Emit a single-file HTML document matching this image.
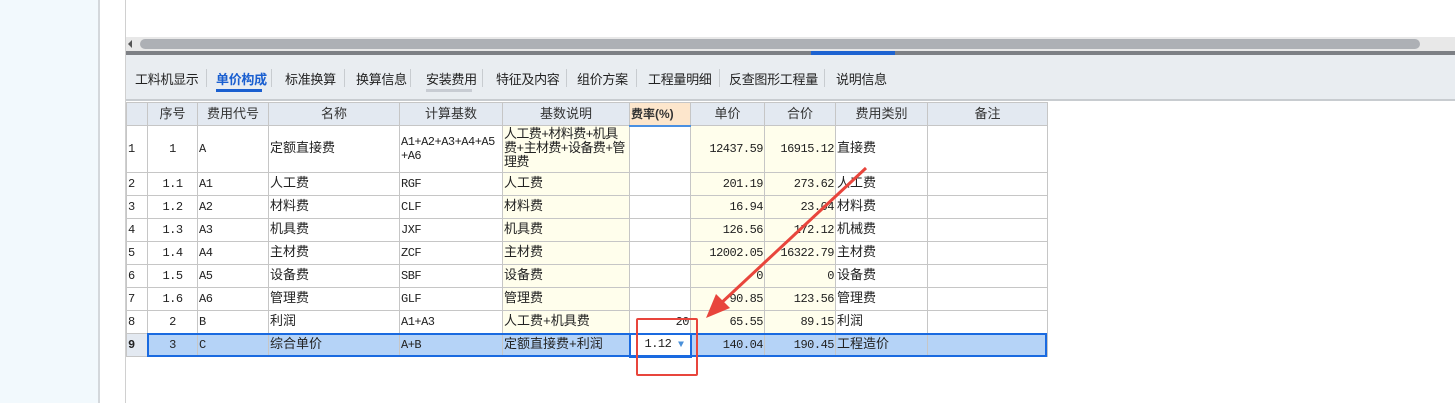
<!DOCTYPE html>
<html><head><meta charset="utf-8"><style>
*{margin:0;padding:0;box-sizing:border-box}
body{width:1455px;height:403px;position:relative;background:#fff;font-family:"Liberation Sans","Noto Sans CJK SC",sans-serif;overflow:hidden}
.lp{position:absolute;left:0;top:0;width:100px;height:403px;background:#f2f9fd;border-right:2px solid #d4d8dc}
.mid{position:absolute;left:125px;top:0;width:1px;height:403px;background:#d0d0d0}
.sb{position:absolute;left:126px;top:37px;width:1329px;height:14px;background:#e8e8e8}
.thumb{position:absolute;left:140px;top:39px;width:1280px;height:10px;border-radius:5px;background:#adb0b5}
.bar{position:absolute;left:126px;top:51px;width:1329px;height:4px;background:#7d8085}
.blue{position:absolute;left:811px;top:51px;width:84px;height:4px;background:#1d63d1}
.tabs{position:absolute;left:126px;top:55px;width:1329px;height:46px;background:#e9edf1;border-bottom:2px solid #c8ccd0}
.tab{position:absolute;top:14px;font-size:13px;color:#222;white-space:nowrap;letter-spacing:-0.3px}
.sep{position:absolute;top:14px;width:1px;height:18px;background:#c8ccd0}
table{position:absolute;left:126px;top:102px;border-collapse:collapse;font-size:12px;letter-spacing:-0.5px;color:#222;table-layout:fixed}
td,th{border:1px solid #c6c6c6;padding:0 1px;height:23px;white-space:nowrap;overflow:hidden;line-height:14px}
td{font-family:"Liberation Mono","Noto Sans CJK SC",monospace}
th{background:#e3e9f1;font-weight:normal;font-family:"Liberation Sans","Noto Sans CJK SC",sans-serif;font-size:13px;letter-spacing:0;color:#333}
th.fr{background:#fde6cc;border-bottom:2px solid #4a90e2;font-weight:bold;font-size:12px;text-align:left}
.c{text-align:center}.r{text-align:right}
.y{background:#fffeec}
.k{font-size:13px;letter-spacing:0}
tr.sel td{background:#b5d3f7}
td.rn{background:#fff}
</style></head><body>
<div class="lp"></div><div class="mid"></div>
<div class="sb"></div><div class="thumb"></div>
<div style="position:absolute;left:128px;top:40px;width:0;height:0;border:4px solid transparent;border-right:4px solid #555;border-left:0"></div>
<div class="bar"></div><div class="blue"></div>
<div class="tabs">
<span class="tab" style="left:9px">工料机显示</span><span class="sep" style="left:80px"></span>
<span class="tab" style="left:90px;color:#1a5fd0;font-weight:bold">单价构成</span>
<div style="position:absolute;left:90px;top:34px;width:46px;height:3px;background:#1a5fd0"></div>
<span class="sep" style="left:145px"></span>
<span class="tab" style="left:159px">标准换算</span><span class="sep" style="left:218px"></span>
<span class="tab" style="left:230px">换算信息</span><span class="sep" style="left:284px"></span>
<span class="tab" style="left:300px">安装费用</span>
<div style="position:absolute;left:300px;top:34px;width:46px;height:3px;background:#c8ccd3"></div>
<span class="sep" style="left:356px"></span>
<span class="tab" style="left:370px">特征及内容</span><span class="sep" style="left:440px"></span>
<span class="tab" style="left:451px">组价方案</span><span class="sep" style="left:510px"></span>
<span class="tab" style="left:522px">工程量明细</span><span class="sep" style="left:593px"></span>
<span class="tab" style="left:603px">反查图形工程量</span><span class="sep" style="left:698px"></span>
<span class="tab" style="left:710px">说明信息</span>
</div>
<table>
<colgroup><col style="width:21px"><col style="width:50px"><col style="width:71px"><col style="width:131px"><col style="width:103px"><col style="width:127px"><col style="width:61px"><col style="width:74px"><col style="width:71px"><col style="width:92px"><col style="width:120px"></colgroup>
<tr><th></th><th>序号</th><th>费用代号</th><th>名称</th><th>计算基数</th><th>基数说明</th><th class="fr">费率(%)</th><th>单价</th><th>合价</th><th>费用类别</th><th>备注</th></tr>
<tr style="height:47px"><td class="rn">1</td><td class="c">1</td><td>A</td><td class="k">定额直接费</td><td style="white-space:normal;word-break:break-all">A1+A2+A3+A4+A5+A6</td><td class="y k" style="white-space:normal;letter-spacing:-0.6px">人工费+材料费+机具费+主材费+设备费+管理费</td><td></td><td class="y r">12437.59</td><td class="y r">16915.12</td><td class="k">直接费</td><td></td></tr>
<tr><td class="rn">2</td><td class="c">1.1</td><td>A1</td><td class="k">人工费</td><td>RGF</td><td class="y k">人工费</td><td></td><td class="y r">201.19</td><td class="y r">273.62</td><td class="k">人工费</td><td></td></tr>
<tr><td class="rn">3</td><td class="c">1.2</td><td>A2</td><td class="k">材料费</td><td>CLF</td><td class="y k">材料费</td><td></td><td class="y r">16.94</td><td class="y r">23.04</td><td class="k">材料费</td><td></td></tr>
<tr><td class="rn">4</td><td class="c">1.3</td><td>A3</td><td class="k">机具费</td><td>JXF</td><td class="y k">机具费</td><td></td><td class="y r">126.56</td><td class="y r">172.12</td><td class="k">机械费</td><td></td></tr>
<tr><td class="rn">5</td><td class="c">1.4</td><td>A4</td><td class="k">主材费</td><td>ZCF</td><td class="y k">主材费</td><td></td><td class="y r">12002.05</td><td class="y r">16322.79</td><td class="k">主材费</td><td></td></tr>
<tr><td class="rn">6</td><td class="c">1.5</td><td>A5</td><td class="k">设备费</td><td>SBF</td><td class="y k">设备费</td><td></td><td class="y r">0</td><td class="y r">0</td><td class="k">设备费</td><td></td></tr>
<tr><td class="rn">7</td><td class="c">1.6</td><td>A6</td><td class="k">管理费</td><td>GLF</td><td class="y k">管理费</td><td></td><td class="y r">90.85</td><td class="y r">123.56</td><td class="k">管理费</td><td></td></tr>
<tr><td class="rn">8</td><td class="c">2</td><td>B</td><td class="k">利润</td><td>A1+A3</td><td class="y k">人工费+机具费</td><td class="r">20</td><td class="y r">65.55</td><td class="y r">89.15</td><td class="k">利润</td><td></td></tr>
<tr class="sel"><td class="rn" style="background:#e3e9f1;font-weight:bold;font-size:12px">9</td><td class="c">3</td><td>C</td><td class="k">综合单价</td><td>A+B</td><td class="k">定额直接费+利润</td><td style="background:#fff;border:2px solid #1a6ae0;padding-left:14px;font-size:12px">1.12 <span style="color:#4a90d9;font-size:10px">▼</span></td><td class="r">140.04</td><td class="r">190.45</td><td class="k">工程造价</td><td></td></tr>
</table>
<div style="position:absolute;left:147px;top:333px;width:900px;height:24px;border:2px solid #1a6ae0;pointer-events:none"></div>
<div style="position:absolute;left:636px;top:318px;width:62px;height:58px;border:2px solid #e8453c;border-radius:2px"></div>
<svg style="position:absolute;left:0;top:0" width="1455" height="403"><line x1="866" y1="168" x2="718" y2="306" stroke="#e8453c" stroke-width="3"/><polygon points="706,318 716,294 730,308" fill="#e8453c"/></svg>
</body></html>
